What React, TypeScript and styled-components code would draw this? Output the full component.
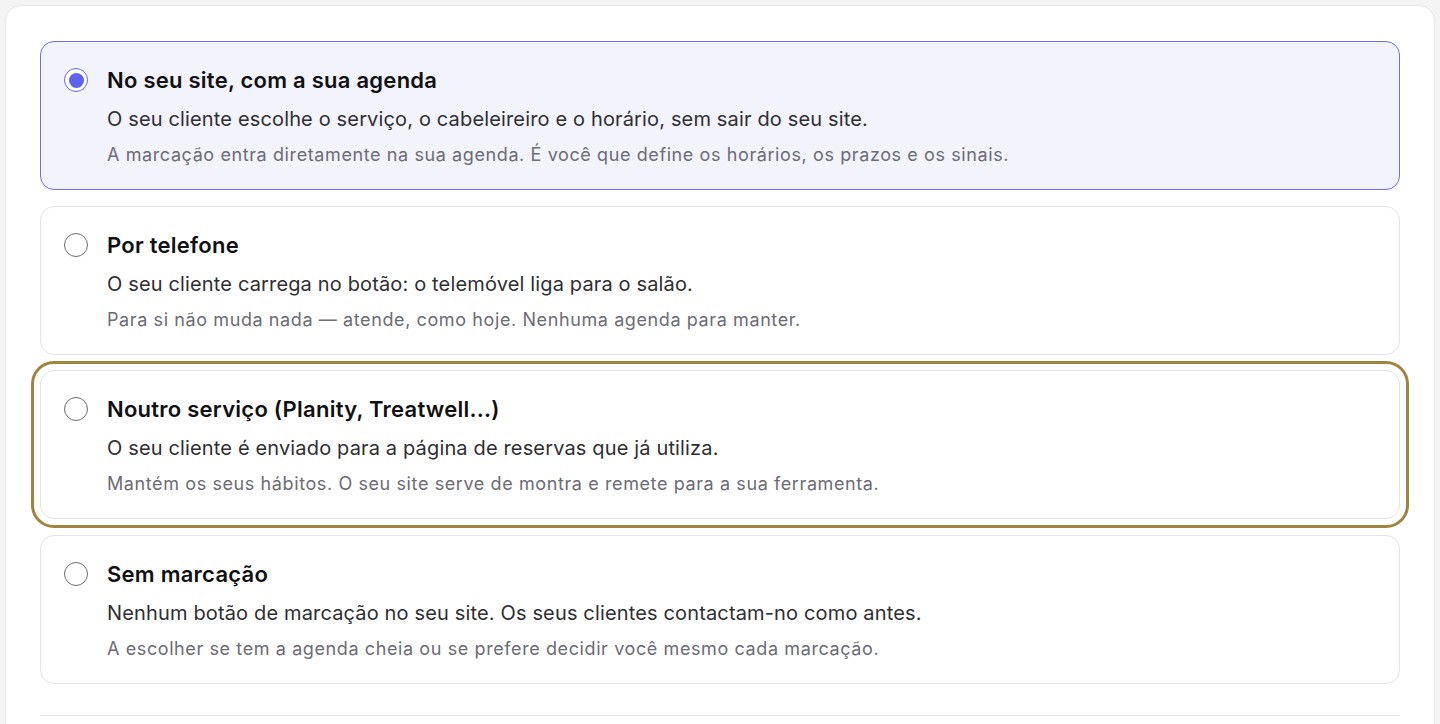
import React, { useState } from 'react';
import styled, { createGlobalStyle, css } from 'styled-components';

const GlobalStyle = createGlobalStyle`
    html, body {
        margin: 0;
        padding: 0;
        background: #f4f4f5;
    }
    body {
        font-family: Inter, "Noto Sans", "Liberation Sans", sans-serif;
        padding: 5px;
    }
    * {
        box-sizing: border-box;
    }
`;

const Panel = styled.section`
    background: #ffffff;
    border: 1px solid #e7e7e9;
    border-radius: 16px;
    padding: 35px 34px 40px 34px;
    width: 1430px;
`;

const OptionList = styled.div`
    display: flex;
    flex-direction: column;
    gap: 15.5px;
`;

const OptionCard = styled.label<{ $selected: boolean; $focused: boolean }>`
    display: grid;
    grid-template-columns: 24px 1fr;
    column-gap: 19px;
    padding: 24px 24px 21px 23px;
    border-radius: 14px;
    border: 1px solid #e4e4e7;
    background: #ffffff;
    cursor: pointer;
    ${(p) => p.$selected && css`
        background: #f3f3fe;
        border-color: #6d70e4;
    `}
    ${(p) => p.$focused && css`
        outline: 3px solid #a3833d;
        outline-offset: 6px;
    `}
`;

const Radio = styled.span<{ $checked: boolean }>`
    width: 24px;
    height: 24px;
    margin-top: 2px;
    border-radius: 50%;
    border: 1.5px solid #6b6b6b;
    background: #ffffff;
    display: flex;
    align-items: center;
    justify-content: center;
    ${(p) => p.$checked && css`
        border: 1.5px solid #6366f1;
        &::after {
            content: '';
            width: 15px;
            height: 15px;
            border-radius: 50%;
            background: #5f62ef;
        }
    `}
`;

const TextBlock = styled.div`
    display: flex;
    flex-direction: column;
`;

const Title = styled.div`
    font-size: 22px;
    line-height: 28px;
    font-weight: 600;
    letter-spacing: 0.25px;
    color: #111113;
    margin-bottom: 11px;
`;

const Lead = styled.div`
    font-size: 20px;
    line-height: 28px;
    letter-spacing: 0.15px;
    color: #2f2f33;
    margin-bottom: 9px;
`;

const Hint = styled.div`
    font-size: 18px;
    line-height: 26px;
    letter-spacing: 0.6px;
    color: #6c6c74;
`;

const Divider = styled.hr`
    border: none;
    border-top: 1px solid #e4e4e7;
    margin: 31px 0 0 0;
`;

type IOption = {
    id: string,
    title: string,
    lead: string,
    hint: string,
};

const OPTIONS: IOption[] = [
    {
        id: 'site',
        title: 'No seu site, com a sua agenda',
        lead: 'O seu cliente escolhe o serviço, o cabeleireiro e o horário, sem sair do seu site.',
        hint: 'A marcação entra diretamente na sua agenda. É você que define os horários, os prazos e os sinais.',
    },
    {
        id: 'phone',
        title: 'Por telefone',
        lead: 'O seu cliente carrega no botão: o telemóvel liga para o salão.',
        hint: 'Para si não muda nada — atende, como hoje. Nenhuma agenda para manter.',
    },
    {
        id: 'other',
        title: 'Noutro serviço (Planity, Treatwell...)',
        lead: 'O seu cliente é enviado para a página de reservas que já utiliza.',
        hint: 'Mantém os seus hábitos. O seu site serve de montra e remete para a sua ferramenta.',
    },
    {
        id: 'none',
        title: 'Sem marcação',
        lead: 'Nenhum botão de marcação no seu site. Os seus clientes contactam-no como antes.',
        hint: 'A escolher se tem a agenda cheia ou se prefere decidir você mesmo cada marcação.',
    },
];

const App: React.FC = () => {
    const [selected, setSelected] = useState('site');
    const focused = 'other';

    return <>
        <GlobalStyle />
        <Panel>
            <OptionList role="radiogroup">
                {OPTIONS.map((item) => (
                    <OptionCard
                        key={item.id}
                        $selected={item.id === selected}
                        $focused={item.id === focused}
                        onClick={() => setSelected(item.id)}
                    >
                        <Radio $checked={item.id === selected} />
                        <TextBlock>
                            <Title>{item.title}</Title>
                            <Lead>{item.lead}</Lead>
                            <Hint>{item.hint}</Hint>
                        </TextBlock>
                    </OptionCard>
                ))}
            </OptionList>
            <Divider />
        </Panel>
    </>;
};

export default App;
